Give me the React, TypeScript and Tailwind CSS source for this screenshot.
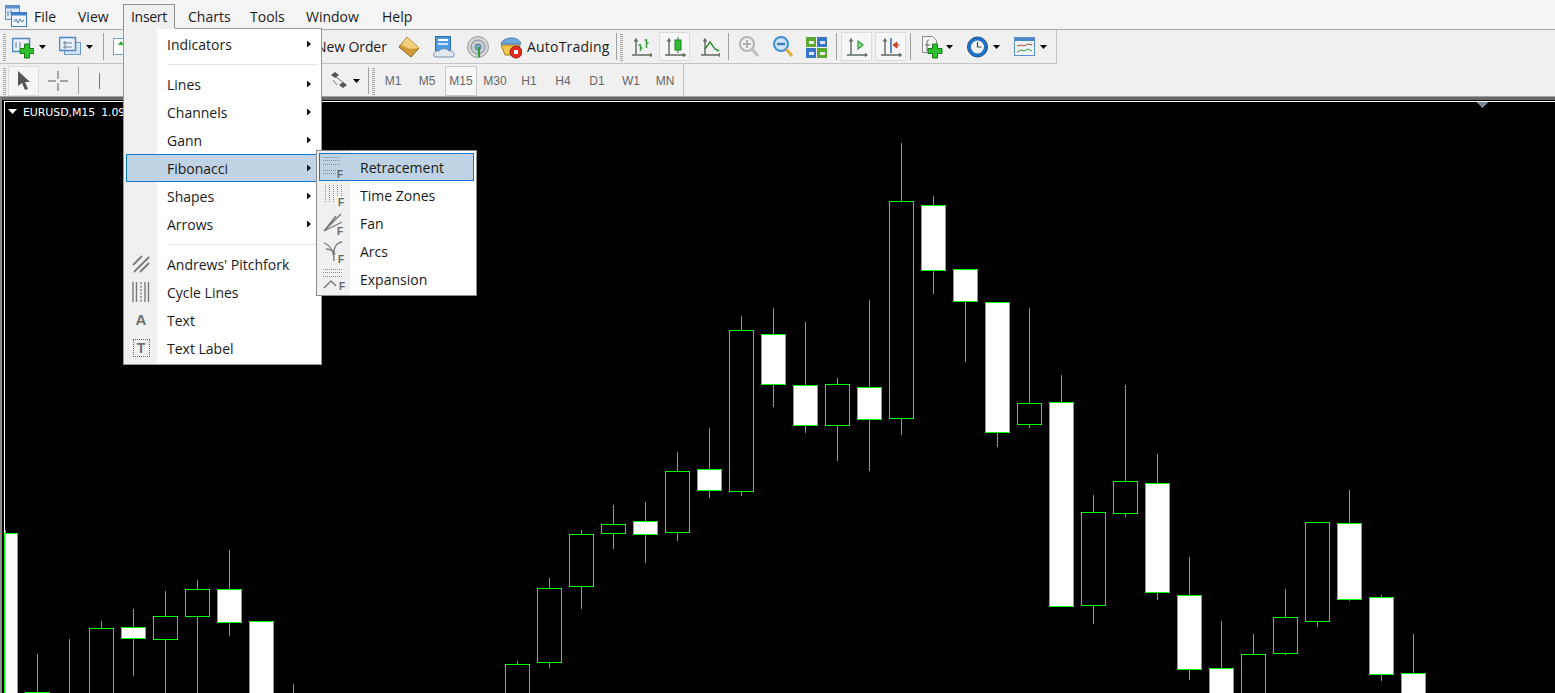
import React from 'react';

const candles: [number, number, number, number, number, boolean][] = [
  [37, 654, 692, 720, 720, true],
  [69, 639, 720, 720, 720, false],
  [101, 621, 628, 720, 720, false],
  [133, 609, 627, 638, 676, true],
  [165, 591, 616, 639, 720, false],
  [197, 580, 589, 616, 720, false],
  [229, 550, 589, 622, 636, true],
  [261, 621, 621, 720, 720, true],
  [293, 684, 720, 720, 720, false],
  [517, 661, 664, 720, 720, false],
  [549, 578, 588, 662, 668, false],
  [581, 530, 534, 586, 609, false],
  [613, 505, 524, 533, 549, false],
  [645, 502, 521, 534, 563, true],
  [677, 452, 471, 532, 541, false],
  [709, 428, 469, 490, 498, true],
  [741, 316, 330, 491, 496, false],
  [773, 308, 334, 384, 407, true],
  [805, 322, 385, 425, 433, true],
  [837, 378, 384, 425, 461, false],
  [869, 300, 387, 419, 471, true],
  [901, 143, 201, 418, 435, false],
  [933, 196, 205, 270, 294, true],
  [965, 269, 269, 301, 362, true],
  [997, 302, 302, 432, 447, true],
  [1029, 308, 403, 424, 428, false],
  [1061, 375, 402, 606, 606, true],
  [1093, 495, 512, 605, 624, false],
  [1125, 385, 481, 513, 517, false],
  [1157, 454, 483, 592, 600, true],
  [1189, 557, 595, 669, 680, true],
  [1221, 621, 668, 720, 720, true],
  [1253, 634, 654, 720, 720, false],
  [1285, 589, 617, 653, 655, false],
  [1317, 522, 522, 621, 627, false],
  [1349, 490, 523, 599, 601, true],
  [1381, 595, 597, 674, 681, true],
  [1413, 634, 673, 720, 720, true],
];

const Grip = ({ className = '' }: { className?: string }) => (
  <div className={`w-[3px] h-[28px] shrink-0 bg-[repeating-linear-gradient(0deg,#a8a8a8_0px,#a8a8a8_1px,transparent_1px,transparent_2px)] ${className}`} />
);

const Sep = ({ className = '' }: { className?: string }) => (
  <div className={`w-px h-[27px] shrink-0 bg-[#a0a0a0] ${className}`} />
);

const Caret = ({ className = '' }: { className?: string }) => (
  <svg width="7" height="4" viewBox="0 0 7 4" className={`shrink-0 ${className}`}>
    <polygon points="0,0 7,0 3.5,4" fill="#000" />
  </svg>
);

const Arrow = ({ active }: { active?: boolean }) => (
  <svg width="4" height="7" viewBox="0 0 4 7" className={`absolute top-1/2 -translate-y-1/2 ${active ? 'right-[13px]' : 'right-[10px]'}`}>
    <polygon points="0,0 4,3.5 0,7" fill="#111" />
  </svg>
);

const Plus = ({ x, y }: { x: number; y: number }) => (
  <path
    d={`M${x - 2.5} ${y - 7}h5v4.5h4.5v5h-4.5v4.5h-5v-4.5h-4.5v-5h4.5z`}
    fill="#2fc02f"
    stroke="#167a16"
    strokeWidth="1"
  />
);

const Ic = ({ w = 22, className = '', children }: { w?: number; className?: string; children: React.ReactNode }) => (
  <svg width={w} height="24" viewBox={`0 0 ${w} 24`} className={`shrink-0 ${className}`}>
    {children}
  </svg>
);

const Axes = ({ c = '#5f6a60' }: { c?: string }) => (
  <path d="M5 4v16M1 20h20M3.5 6.500L5 4l1.500 2.500M19 18.500l2 1.500-2 1.500" stroke={c} strokeWidth="1.400" fill="none" />
);

const Toggle = ({ className = '', children }: { className?: string; children: React.ReactNode }) => (
  <div className={`w-[31px] h-[29px] shrink-0 flex items-center justify-center border border-[#dcdcdc] bg-[#f6f6f6] ${className}`}>
    {children}
  </div>
);

const MenuItem = ({ label, arrow, active, icon }: { label: string; arrow?: boolean; active?: boolean; icon?: React.ReactNode }) => (
  <div className={`relative h-[28px] flex items-center text-[14px] text-[#1a1a1a] ${active ? 'bg-[#bfd3e4] border border-[#0f78d2] ml-[2px] mr-[-4px] pl-[40px]' : 'pl-[43px]'}`}>
    {icon && <div className="absolute left-[4px] top-[2px] w-[26px] h-[24px] flex items-center justify-center">{icon}</div>}
    {label}
    {arrow && <Arrow active={active} />}
  </div>
);

const SubItem = ({ label, active, icon }: { label: string; active?: boolean; icon: React.ReactNode }) => (
  <div className={`relative h-[28px] flex items-center text-[14px] text-[#1a1a1a] ${active ? 'bg-[#bfd3e4] border border-[#0f78d2] mx-[2px] pl-[40px]' : 'pl-[43px]'}`}>
    <div className={`absolute ${active ? 'left-[2px] top-[-1px]' : 'left-[5px] top-0'}`}>{icon}</div>
    {label}
  </div>
);

const MenuSep = () => (
  <div className="h-[12px] flex items-center pl-[44px] pr-[3px]">
    <div className="h-px w-full bg-[#e6e6e6]" />
  </div>
);

const G = '#7c7c7c';

const FMark = ({ x, y }: { x: number; y: number }) => (
  <text x={x} y={y} fontSize="10" fontWeight="700" fill="#666" fontFamily="Liberation Sans, sans-serif">F</text>
);

const SubIcon = ({ children }: { children: React.ReactNode }) => (
  <svg width="26" height="28" viewBox="0 0 26 28">{children}</svg>
);

const dots = { stroke: '#8a8a8a', strokeWidth: 1, strokeDasharray: '1 1', fill: 'none' };

export default function App() {
  const tf = ['M1', 'M5', 'M15', 'M30', 'H1', 'H4', 'D1', 'W1', 'MN'];

  return (
    <div className="relative w-[1555px] h-[693px] overflow-hidden flex flex-col bg-[#f0f0f0] font-['Open_Sans',sans-serif]">
      {/* Menu bar */}
      <div className="h-[30px] shrink-0 flex items-start bg-[#f4f4f4] border-b border-[#a8a8a8] text-[14px] text-[#1a1a1a]">
        <svg width="22" height="22" viewBox="0 0 22 22" className="ml-[5px] mt-[5px] shrink-0">
          <rect x="0.500" y="0.500" width="14" height="14" fill="#dfe9f7" stroke="#5b8fce" />
          <rect x="0.500" y="0.500" width="14" height="3" fill="#5b8fce" />
          <rect x="6.500" y="7.500" width="15" height="14" fill="#f2f6fc" stroke="#3f7cc6" />
          <rect x="6.500" y="7.500" width="15" height="3" fill="#3f7cc6" />
          <path d="M9 17l2-3 2 4 2-4 2 3 2-2" stroke="#4a78b0" fill="none" />
          <path d="M3 6v5M6 5v4" stroke="#4a78b0" fill="none" />
        </svg>
        <div className="ml-[7px] w-[23px] mt-[4px] h-[24px] flex items-center">File</div>
        <div className="ml-[21px] w-[32px] mt-[4px] h-[24px] flex items-center">View</div>
        <div className="ml-[13px] w-[52px] mt-[4px] h-[25px] pl-[7px] pb-[1px] flex items-center bg-[#f0f0f0] border border-b-0 border-[#8f8f8f] tracking-[-0.3px]">Insert</div>
        <div className="ml-[13px] w-[41px] mt-[4px] h-[24px] flex items-center">Charts</div>
        <div className="ml-[21px] w-[35px] mt-[4px] h-[24px] flex items-center">Tools</div>
        <div className="ml-[21px] w-[55px] mt-[4px] h-[24px] flex items-center">Window</div>
        <div className="ml-[21px] w-[32px] mt-[4px] h-[24px] flex items-center">Help</div>
      </div>

      {/* Main toolbar */}
      <div className="h-[34px] shrink-0">
        <div className="w-[1057px] h-[34px] flex items-center border-r border-b border-[#c4c4c4] text-[14px] text-[#1a1a1a]">
          <Grip className="ml-[3px]" />
          <Ic className="ml-[6px]">
            <rect x="0.500" y="3.500" width="17" height="13" fill="#eaf1fa" stroke="#4c86c6" strokeWidth="1.500" />
            <path d="M4 7v6M8 7v6" stroke="#5a7a9a" />
            <Plus x={15} y={16} />
          </Ic>
          <Caret className="ml-[5px]" />
          <Ic className="ml-[13px]">
            <rect x="5.500" y="7.500" width="16" height="12" fill="#d5e4f5" stroke="#6d9bcf" />
            <rect x="0.500" y="2.500" width="16" height="13" fill="#eaf1fa" stroke="#4c86c6" strokeWidth="1.500" />
            <path d="M4 8h9M4 12h9M6 6v8" stroke="#6a7f96" />
          </Ic>
          <Caret className="ml-[5px]" />
          <Sep className="ml-[10px]" />
          <Ic w={18} className="ml-[8px]">
            <rect x="1.500" y="3.500" width="15" height="16" fill="#fff" stroke="#7aa0c8" />
            <path d="M6 10l3-4 3 4z" fill="#2fb02f" />
          </Ic>
          <div className="ml-[186px] w-[70px] shrink-0 whitespace-nowrap tracking-[-0.1px]">New Order</div>
          <Ic className="ml-[12px]">
            <path d="M9 2l12 11-8 9L1 12z" fill="#d29a32" stroke="#8a6420" />
            <path d="M9 2l12 11-9 1-9-4z" fill="#f0cf78" />
          </Ic>
          <Ic className="ml-[13px]">
            <rect x="2.500" y="1.500" width="15" height="14" fill="#4d9be0" stroke="#2a6cb0" />
            <rect x="5" y="4" width="10" height="2" fill="#fff" />
            <rect x="5" y="8" width="10" height="2" fill="#cfe6fa" />
            <path d="M2 22c-3-3 0-7 4-6 2-3 8-3 10 0 4-1 7 3 4 6z" fill="#dfe8f2" stroke="#7b8fa6" />
          </Ic>
          <Ic className="ml-[12px]">
            <circle cx="11" cy="12" r="10.500" fill="#d8d8d8" stroke="#9a9a9a" />
            <circle cx="11" cy="12" r="7" fill="#c8ccd0" stroke="#7d8c9a" />
            <circle cx="11" cy="12" r="3" fill="#7fa8c8" stroke="#5a7a90" />
            <path d="M12 12v10" stroke="#2f9a3a" strokeWidth="2" />
          </Ic>
          <Ic className="ml-[11px]">
            <path d="M1 10l4 10h12l3-10z" fill="#f0c84a" stroke="#a08020" />
            <path d="M1 9c1-7 18-9 20 0z" fill="#6fa8dc" stroke="#4a7aa8" />
            <circle cx="16" cy="17" r="6" fill="#e02c20" stroke="#a81810" />
            <rect x="14" y="15" width="4" height="4" fill="#fff" />
          </Ic>
          <div className="ml-[5px] w-[83px] shrink-0 whitespace-nowrap tracking-[0.2px]">AutoTrading</div>
          <Sep className="ml-[6px]" />
          <Grip className="ml-[3px]" />
          <Ic w={21} className="ml-[8px]">
            <Axes />
            <path d="M9.500 16v-6h-2M9.500 13h2M15.500 13v-8h-2M15.500 8h2" stroke="#2f9a3a" strokeWidth="1.400" fill="none" />
          </Ic>
          <Toggle className="ml-[7px]">
            <Ic w={22}>
              <Axes />
              <path d="M14 2v16" stroke="#1f7a2a" />
              <rect x="11" y="5" width="6" height="10" fill="#2fc02f" stroke="#1f7a2a" />
            </Ic>
          </Toggle>
          <Ic w={20} className="ml-[10px]">
            <Axes />
            <path d="M5 14l5-7 5 7 4 2" stroke="#2f8a3a" strokeWidth="1.400" fill="none" />
          </Ic>
          <Sep className="ml-[8px]" />
          <Ic className="ml-[9px]">
            <circle cx="9" cy="9" r="7" fill="#f0f0f0" stroke="#b4b4b4" strokeWidth="2" />
            <path d="M5 9h8M9 5v8" stroke="#b0b0b0" strokeWidth="2" />
            <path d="M14 14l6 7" stroke="#bdbdbd" strokeWidth="3" />
          </Ic>
          <Ic className="ml-[12px]">
            <circle cx="9" cy="9" r="7" fill="#cfe4f8" stroke="#3f8fd8" strokeWidth="2" />
            <path d="M5 9h8" stroke="#3f7fc0" strokeWidth="2.500" />
            <path d="M14 14l6 7" stroke="#d8b040" strokeWidth="3" />
          </Ic>
          <Ic w={21} className="ml-[12px]">
            <rect x="0" y="2" width="10" height="10" fill="#5ca832" />
            <rect x="11" y="2" width="10" height="10" fill="#3a76c8" />
            <rect x="0" y="13" width="10" height="10" fill="#3a76c8" />
            <rect x="11" y="13" width="10" height="10" fill="#5ca832" />
            <rect x="3" y="6" width="5" height="3" fill="#e8f0e0" />
            <rect x="14" y="6" width="5" height="3" fill="#e0e8f8" />
            <rect x="3" y="17" width="5" height="3" fill="#e0e8f8" />
            <rect x="14" y="17" width="5" height="3" fill="#e8f0e0" />
          </Ic>
          <Sep className="ml-[9px]" />
          <Toggle className="ml-[4px]">
            <Ic w={22}>
              <Axes />
              <path d="M12 6l5 4-5 4z" fill="#8fe08f" stroke="#2f9a3a" strokeWidth="1.200" />
            </Ic>
          </Toggle>
          <Toggle className="ml-[3px]">
            <Ic w={22}>
              <Axes />
              <path d="M11 3v15" stroke="#2a6ca8" strokeWidth="1.500" />
              <path d="M20 10h-4M13 10l4-3v6z" fill="#d04020" stroke="#d04020" />
            </Ic>
          </Toggle>
          <Sep className="ml-[4px]" />
          <Ic className="ml-[10px]">
            <path d="M1.500 1.500h10l4 4v12h-14z" fill="#f4f4f4" stroke="#8a8a8a" />
            <path d="M8 5c-2 0-2 1-2 3v8M4 10h5" stroke="#666" fill="none" />
            <Plus x={14} y={16} />
          </Ic>
          <Caret className="ml-[3px]" />
          <Ic w={21} className="ml-[14px]">
            <circle cx="10.500" cy="12" r="10" fill="#1f74c8" stroke="#14508c" />
            <circle cx="10.500" cy="12" r="6.500" fill="#f2f2f2" />
            <path d="M10.500 7v5h4" stroke="#444" strokeWidth="1.200" fill="none" />
          </Ic>
          <Caret className="ml-[5px]" />
          <Ic w={21} className="ml-[14px]">
            <rect x="0.500" y="2.500" width="20" height="18" fill="#eef3fa" stroke="#5b8fce" />
            <rect x="1" y="3" width="19" height="3" fill="#4c86c6" />
            <path d="M3 11l4-1 3 1 4-2 4 1" stroke="#b04a30" fill="none" />
            <path d="M3 17l4-2 3 1 4-2 4 2" stroke="#3f9a3f" fill="none" />
          </Ic>
          <Caret className="ml-[5px]" />
        </div>
      </div>

      {/* Line studies and periods toolbar */}
      <div className="h-[33px] shrink-0 border-b border-[#a0a0a0]">
        <div className="w-[684px] h-[33px] flex items-center border-r border-[#c4c4c4]">
          <Grip className="ml-[3px]" />
          <div className="ml-[2px] w-[31px] h-[30px] shrink-0 flex items-center justify-center border border-[#dcdcdc] bg-[#f6f6f6]">
            <svg width="14" height="19" viewBox="0 0 14 19">
              <path d="M1 0v15l4-3 3 7 3-1-3-7h5z" fill="#555" />
            </svg>
          </div>
          <svg width="20" height="20" viewBox="0 0 20 20" className="ml-[9px] shrink-0">
            <path d="M10 0v8M10 12v8M0 10h8M12 10h8" stroke="#888" strokeWidth="1.400" />
          </svg>
          <Sep className="ml-[10px]" />
          <div className="ml-[20px] w-px h-[16px] shrink-0 bg-[#777]" />
          <svg width="18" height="20" viewBox="0 0 18 20" className="ml-[230px] shrink-0">
            <path d="M1 4l4-3 4 3-4 3zM9 14l4-3 4 3-4 3z" fill="#555" />
            <path d="M6 6l8 6M3 9l4 5" stroke="#777" fill="none" />
          </svg>
          <Caret className="ml-[5px]" />
          <Sep className="ml-[8px]" />
          <Grip className="ml-[3px]" />
          <div className="ml-px flex">
            {tf.map((t) => (
              <div
                key={t}
                className={`h-[30px] flex items-center justify-center text-[12px] text-[#666] font-['Liberation_Sans',sans-serif] ${t === 'M15' ? 'border border-[#c8c8c8] bg-[#f6f6f6] mx-[1px] w-[32px]' : 'w-[34px]'}`}
              >
                {t}
              </div>
            ))}
          </div>
        </div>
      </div>

      {/* Chart window */}
      <div className="relative flex-1 min-h-0 border-t-[3px] border-t-[#6a6a6a] border-l-2 border-l-[#8c8c8c] bg-black">
        <svg width="1553" height="593" viewBox="2 100 1553 593" className="block" shapeRendering="crispEdges">
          <path d="M4.500 693V101.500H1555" stroke="#fff" fill="none" />
          <rect x="4.500" y="533.500" width="13" height="180" fill="#fff" stroke="#00ff00" />
          <path d="M5.500 530v4" stroke="#00ff00" />
          {candles.map(([c, hi, top, bot, lo, white]) => (
            <g key={c}>
              <path d={`M${c + 0.5} ${hi}V${lo}`} stroke="#00ff00" />
              {bot > top && (
                <rect
                  x={c - 11.5}
                  y={top + 0.5}
                  width={24}
                  height={bot - top}
                  fill={white ? '#fff' : '#000'}
                  stroke="#00ff00"
                />
              )}
            </g>
          ))}
          <polygon points="1476,102 1488,102 1482,108" fill="#778899" />
        </svg>
        <div className="absolute left-[21px] top-[6px] flex items-center gap-[6px] text-[11px] leading-[14px] text-white whitespace-nowrap font-['DejaVu_Sans',sans-serif] tracking-[-0.1px]">
          <span>EURUSD,M15</span>
          <span>1.09</span>
        </div>
        <svg width="9" height="5" viewBox="0 0 9 5" className="absolute left-[6px] top-[9px]">
          <polygon points="0,0 9,0 4.500,5" fill="#fff" />
        </svg>
      </div>

      {/* Insert menu */}
      <div className="absolute left-[123px] top-[28px] w-[199px] h-[337px] bg-white border border-[#979797] pt-[1px]">
        <div className="absolute left-0 top-0 bottom-0 w-[33px] bg-[#f0f0f0]" />
        <div className="absolute left-0 -top-px w-[51px] h-px bg-[#f0f0f0]" />
        <div className="relative">
          <MenuItem label="Indicators" arrow />
          <MenuSep />
          <MenuItem label="Lines" arrow />
          <MenuItem label="Channels" arrow />
          <MenuItem label="Gann" arrow />
          <MenuItem label="Fibonacci" arrow active />
          <MenuItem label="Shapes" arrow />
          <MenuItem label="Arrows" arrow />
          <MenuSep />
          <MenuItem
            label="Andrews' Pitchfork"
            icon={
              <svg width="18" height="18" viewBox="0 0 18 18">
                <path d="M1 10L10 1M2 17L17 2M8 17l9-9" stroke={G} strokeWidth="1.800" />
              </svg>
            }
          />
          <MenuItem
            label="Cycle Lines"
            icon={
              <svg width="18" height="20" viewBox="0 0 18 20">
                <path d="M1 0v20M4.500 0v20M13 0v20M16.500 0v20" stroke={G} strokeWidth="1.400" />
                <path d="M9 0v20" stroke={G} strokeWidth="1.400" strokeDasharray="2 1.500" />
              </svg>
            }
          />
          <MenuItem label="Text" icon={<span className="text-[15px] font-bold text-[#6e6e6e] font-['Liberation_Sans',sans-serif]">A</span>} />
          <MenuItem
            label="Text Label"
            icon={
              <div className="w-[17px] h-[18px] flex items-center justify-center border border-dotted border-[#666] text-[14px] font-bold leading-none text-[#6e6e6e] font-['Liberation_Sans',sans-serif]">
                T
              </div>
            }
          />
        </div>
      </div>

      {/* Fibonacci submenu */}
      <div className="absolute left-[316px] top-[150px] w-[161px] h-[146px] bg-white border border-[#8c8c8c] pt-[2px]">
        <div className="absolute left-0 top-0 bottom-0 w-[33px] bg-[#f0f0f0]" />
        <div className="relative">
          <SubItem
            label="Retracement"
            active
            icon={
              <SubIcon>
                <path d="M1 4.500h18M1 7.500h18M1 11.500h18M1 17.500h18M1 20.500h13" {...dots} />
                <FMark x={15} y={25} />
              </SubIcon>
            }
          />
          <SubItem
            label="Time Zones"
            icon={
              <SubIcon>
                <path d="M3.500 4v17M7.500 4v17M11.500 4v17M15.500 4v12M19.500 4v12" {...dots} />
                <FMark x={16} y={25} />
              </SubIcon>
            }
          />
          <SubItem
            label="Fan"
            icon={
              <SubIcon>
                <path d="M2 22L19 5M2 22L14 7M2 22L20 13" stroke="#777" strokeWidth="1.300" fill="none" />
                <FMark x={15} y={26} />
              </SubIcon>
            }
          />
          <SubItem
            label="Arcs"
            icon={
              <SubIcon>
                <path d="M2 6c6 2 10 7 10 18M20 5c-6 1-8 6-8 10M4 12c5 0 8 2 9 6" stroke="#777" strokeWidth="1.300" fill="none" />
                <FMark x={16} y={26} />
              </SubIcon>
            }
          />
          <SubItem
            label="Expansion"
            icon={
              <SubIcon>
                <path d="M1 4.500h19M1 7.500h19M1 11.500h19" {...dots} />
                <path d="M2 23l7-7 5 5" stroke="#777" strokeWidth="1.400" fill="none" />
                <FMark x={17} y={25} />
              </SubIcon>
            }
          />
        </div>
      </div>
    </div>
  );
}
